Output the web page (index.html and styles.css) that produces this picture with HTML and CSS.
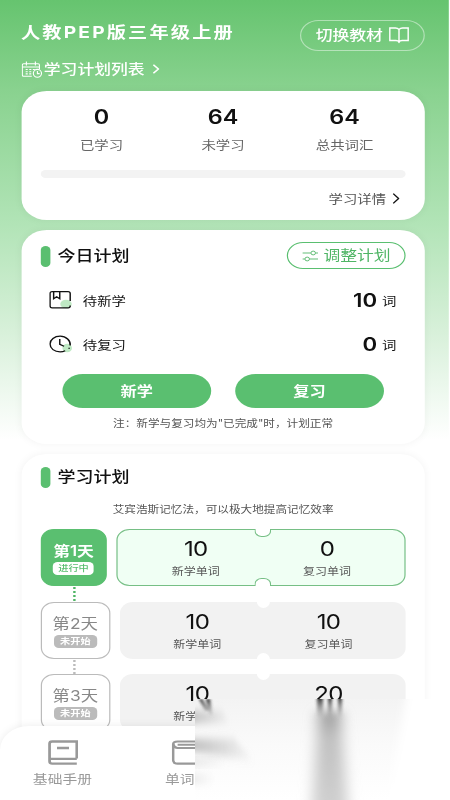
FILE: index.html
```
<!DOCTYPE html>
<html lang="zh-CN">
<head>
    <meta charset="UTF-8">
    <meta name="viewport" content="width=device-width, initial-scale=1.0">
    <title>学习计划</title>
    <link rel="stylesheet" href="styles.css">
</head>
<body>
    <div class="screen">
        <header class="header">
            <div class="header-top">
                <h1>人教PEP版三年级上册</h1>
                <button class="switch-btn"><span>切换教材</span>
                    <svg width="17" height="17" viewBox="0 0 20 17" preserveAspectRatio="none" fill="none" stroke="currentColor" stroke-width="1.4"><path d="M10 2.5C9 1.4 8 1 6.500 1H1v12.500h6c1.500 0 2.500.5 3 1.500.5-1 1.500-1.500 3-1.500h6V1h-5.500C12 1 11 1.400 10 2.500V16"/></svg>
                </button>
            </div>
            <a class="plan-link">
                <svg width="17" height="17" viewBox="0 0 20 17" preserveAspectRatio="none" fill="none" stroke="currentColor" stroke-width="1.1"><path d="M17.500 8V4c0-.8-.5-1.300-1.300-1.300H2C1.200 2.700.7 3.200.7 4v10c0 .8.5 1.300 1.300 1.300h8M.7 6h16.800M4.700.5v4M13.500.5v4"/><path d="M4 8.500h2M7.500 8.500h2M11 8.500h2M4 10.700h2M7.500 10.700h2M4 12.900h2M7.500 12.900h2"/><ellipse cx="15.500" cy="12.300" rx="4" ry="3.900"/><path d="M15.500 10v2.600h2.200"/></svg>
                <span>学习计划列表</span>
                <svg class="link-arrow" width="6" height="10" viewBox="0 0 6 10" fill="none" stroke="currentColor" stroke-width="1.400"><path d="M.8.8L5 5 .8 9.200"/></svg>
            </a>
        </header>

        <section class="card summary">
            <div class="stats">
                <div class="stat"><strong>0</strong><span>已学习</span></div>
                <div class="stat"><strong>64</strong><span>未学习</span></div>
                <div class="stat"><strong>64</strong><span>总共词汇</span></div>
            </div>
            <div class="progress"></div>
            <a class="detail-link">学习详情
                <svg width="6" height="11" viewBox="0 0 6 11" fill="none" stroke="#111" stroke-width="1.200"><path d="M.7.7L5.200 5.500.7 10.300"/></svg>
            </a>
        </section>

        <section class="card today">
            <div class="card-head">
                <h2>今日计划</h2>
                <button class="adjust-btn">
                    <svg width="13" height="12" viewBox="0 0 13 12" fill="none" stroke="currentColor" stroke-width=".8"><path d="M0 3h7M11 3h2M0 9h2M6 9h7"/><circle cx="9" cy="3" r="1.900"/><circle cx="4" cy="9" r="1.900"/></svg>
                    <span>调整计划</span>
                </button>
            </div>
            <div class="task">
                <svg width="19" height="20" viewBox="0 0 19 20" fill="none" stroke="#111" stroke-width="1.200"><ellipse cx="14" cy="14" rx="4.800" ry="4.300" fill="#bfe9c4" stroke="none"/><path d="M17.500 11V3.500c0-1.200-.6-1.800-1.800-1.800H2.500C1.300 1.700.7 2.300.7 3.500V16c0 1.200.6 1.800 1.800 1.800h13.200c1.200 0 1.800-.6 1.800-1.800v-.5M3.700 1.700v7l2.500-2 2.600 2v-7"/></svg>
                <span class="task-name">待新学</span>
                <strong>10</strong><em>词</em>
            </div>
            <div class="task">
                <svg width="19" height="20" viewBox="0 0 19 20" fill="none" stroke="#111" stroke-width="1.200"><ellipse cx="15" cy="14" rx="4" ry="4.300" fill="#bfe9c4" stroke="none"/><path d="M17.500 11.500c.5-5-3.400-9.300-8.400-9.300-4.700 0-8.400 3.400-8.400 7.800s3.700 7.900 8.400 7.900c1.600 0 3-.4 4.200-1.100M16.300 14.800l.6-1.100M8.800 5v5.300l3.600 2"/></svg>
                <span class="task-name">待复习</span>
                <strong>0</strong><em>词</em>
            </div>
            <div class="actions">
                <button>新学</button>
                <button>复习</button>
            </div>
            <p class="note">注：新学与复习均为"已完成"时，计划正常</p>
        </section>

        <section class="card plan">
            <div class="card-head">
                <h2>学习计划</h2>
            </div>
            <p class="plan-tip">艾宾浩斯记忆法，可以极大地提高记忆效率</p>
            <div class="day active">
                <div class="day-box"><b>第1天</b><i>进行中</i></div>
                <div class="ticket">
                    <div class="cell"><strong>10</strong><span>新学单词</span></div>
                    <div class="cell"><strong>0</strong><span>复习单词</span></div>
                </div>
            </div>
            <div class="day">
                <div class="day-box"><b>第2天</b><i>未开始</i></div>
                <div class="ticket">
                    <div class="cell"><strong>10</strong><span>新学单词</span></div>
                    <div class="cell"><strong>10</strong><span>复习单词</span></div>
                </div>
            </div>
            <div class="day">
                <div class="day-box"><b>第3天</b><i>未开始</i></div>
                <div class="ticket">
                    <div class="cell"><strong>10</strong><span>新学</span></div>
                    <div class="cell"><strong>20</strong><span></span></div>
                </div>
            </div>
        </section>

        <nav class="tabbar">
            <a class="tab">
                <svg width="25" height="25" viewBox="0 0 25 25" fill="none" stroke="currentColor" stroke-width="2.300"><path d="M24 18.500V1.500H3.500C2 1.500 1.300 2.200 1.300 3.700v17.500c0 1.600.7 2.400 2.200 2.400H24M1.500 18.800H24M7.500 8h10"/></svg>
                <span>基础手册</span>
            </a>
            <a class="tab tab-words">
                <svg width="20" height="25" viewBox="0 0 20 25" fill="none" stroke="currentColor" stroke-width="2.100"><path d="M20 1.500H5C2.500 1.500 1.300 2.500 1.300 4.500V20c0 2.400 1.200 3.600 3.700 3.600h15M1.500 4.500C2 6.800 3 8 5 8h15M5 4.700h15"/></svg>
                <span>单词</span>
            </a>
        </nav>
    </div>

    <!-- melting haze over the lower right corner -->
    <svg class="haze" width="450" height="110" viewBox="0 690 450 110">
        <defs>
            <linearGradient id="fade" x1="0" y1="0" x2="0" y2="1">
                <stop offset="0" stop-color="#f2f2f2"/>
                <stop offset=".5" stop-color="#fafafa"/>
                <stop offset="1" stop-color="#fff"/>
            </linearGradient>
            <linearGradient id="drip" x1="0" y1="0" x2="0" y2="1">
                <stop offset="0" stop-color="#999"/>
                <stop offset=".25" stop-color="#c0c0c0"/>
                <stop offset="1" stop-color="#d4d4d4"/>
            </linearGradient>
            <linearGradient id="trail">
                <stop offset="0" stop-color="#bbb"/>
                <stop offset="1" stop-color="#bbb" stop-opacity="0"/>
            </linearGradient>
            <linearGradient id="drop" x1="0" y1="0" x2="0" y2="1">
                <stop offset="0" stop-color="#222"/>
                <stop offset="1" stop-color="#999" stop-opacity="0"/>
            </linearGradient>
            <filter id="wide" x="-50%" y="-20%" width="200%" height="140%"><feGaussianBlur stdDeviation="7 5"/></filter>
            <filter id="thin" x="-100%" y="-20%" width="300%" height="140%"><feGaussianBlur stdDeviation="1.500 .8"/></filter>
            <filter id="side" x="-20%" y="-80%" width="140%" height="260%"><feGaussianBlur stdDeviation="1 4"/></filter>
            <filter id="edge" x="-20%" y="-20%" width="140%" height="140%"><feGaussianBlur stdDeviation="4"/></filter>
            <clipPath id="melt"><path d="M195 800V708l3-9h252v101z"/></clipPath>
        </defs>
        <g clip-path="url(#melt)">
            <path d="M190 690h260v110H190z" fill="url(#fade)"/>
            <path d="M407 690h55v125H386l12-70z" fill="#fff" filter="url(#edge)"/>
            <path d="M190 711h32l10 12h-42z" fill="url(#trail)" filter="url(#side)"/>
            <path d="M190 739h44l22 22-66-10z" fill="url(#trail)" filter="url(#side)"/>
            <path d="M190 760h35v5h-35z" fill="url(#trail)" opacity=".6" filter="url(#side)"/>
            <path d="M190 775h25v8h-25z" fill="url(#trail)" opacity=".4" filter="url(#side)"/>
            <path d="M199 699h3l8 12h-5zM206 699h4l3 19-4-5z" fill="url(#drop)" filter="url(#thin)"/>
            <path d="M319 711h21l9 110h-38z" fill="url(#drip)" filter="url(#wide)"/>
            <path d="M317 697h6v22h-6zM328 697h4v22h-4zM338 697h4v22h-4z" fill="url(#drop)" filter="url(#thin)"/>
        </g>
    </svg>
</body>
</html>
```

FILE: styles.css
```
* {
    margin: 0;
    padding: 0;
    box-sizing: border-box;
}

body {
    width: 450px;
    height: 800px;
    overflow: hidden;
    position: relative;
    background: #fff;
    font-family: Inter, "Noto Sans CJK SC", sans-serif;
    color: #111;
}

button {
    font-family: inherit;
    border: none;
    background: none;
}

/* the whole screen is drawn 1.2 times wider than it is laid out */
.screen {
    position: relative;
    width: 373.5px;
    height: 800px;
    padding: 0 19.2px 0 17.5px;
    overflow: hidden;
    transform: scaleX(1.2);
    transform-origin: 0 0;
    background: linear-gradient(#66c46f 0, #89d28f 90px, #b2e4b7 225px, #d7f0d9 330px, #fff 440px);
}

.header {
    height: 91px;
    padding-top: 20px;
    color: #fff;
}

.header-top {
    display: flex;
    justify-content: space-between;
    align-items: center;
    height: 31px;
}

.header h1 {
    font-size: 16px;
    line-height: 24px;
    font-weight: 700;
    letter-spacing: 1.8px;
    margin-top: -8px;
}

.switch-btn {
    display: flex;
    align-items: center;
    justify-content: center;
    gap: 5px;
    width: 104.5px;
    height: 31px;
    border: 1.5px solid rgba(255, 255, 255, 0.45);
    border-radius: 16px;
    color: #fff;
    font-size: 14px;
    font-weight: 500;
}

.switch-btn span,
.adjust-btn span {
    padding-bottom: 3px;
}

.plan-link {
    display: flex;
    align-items: center;
    height: 20px;
    margin-top: 8px;
    font-size: 14px;
    font-weight: 500;
}

.plan-link span {
    margin: 0 6px 0 2px;
    padding-bottom: 2px;
}

.card {
    background: #fff;
    border-radius: 21px;
    box-shadow: 0 0 8px rgba(0, 0, 0, 0.05);
}

.summary {
    height: 129px;
    padding: 14px 16.5px 0;
}

.stats {
    display: grid;
    grid-template-columns: repeat(3, 1fr);
}

.stat {
    display: flex;
    flex-direction: column;
    align-items: center;
}

.stat strong {
    font-size: 19.500px;
    line-height: 24px;
    font-weight: 600;
}

.stat span {
    margin-top: 8px;
    font-size: 12px;
    line-height: 18px;
    font-weight: 400;
    color: #666;
}

.progress {
    height: 8px;
    margin-top: 15px;
    border-radius: 4px;
    background: #f3f3f3;
}

.detail-link {
    display: flex;
    justify-content: flex-end;
    align-items: center;
    gap: 5px;
    height: 20px;
    margin: 10px 5px 0 0;
    font-size: 12px;
    font-weight: 400;
    color: #555;
}

.today {
    height: 214px;
    margin-top: 10px;
    padding: 12px 16px 0;
}

.card-head {
    display: flex;
    align-items: center;
    height: 27px;
}

.card-head h2 {
    display: flex;
    align-items: center;
    gap: 6.5px;
    font-size: 15px;
    line-height: 22px;
    font-weight: 500;
}

.card-head h2::before {
    content: "";
    width: 8px;
    height: 21px;
    margin-top: 2px;
    border-radius: 4px;
    background: #5abf70;
}

.adjust-btn {
    display: flex;
    align-items: center;
    justify-content: center;
    gap: 5px;
    width: 99.5px;
    height: 27px;
    margin-left: auto;
    border: 1px solid #5abf70;
    border-radius: 14px;
    color: #4fb565;
    font-size: 14px;
}

.task {
    display: flex;
    align-items: center;
    height: 44px;
    padding: 0 8px 0 7px;
}

.card-head + .task {
    margin-top: 9px;
}

.task-name {
    flex: 1;
    margin-left: 9.5px;
    font-size: 12px;
}

.task strong {
    font-size: 18.500px;
    font-weight: 600;
}

.task em {
    margin-left: 4px;
    font-size: 12px;
    font-style: normal;
}

.actions {
    display: flex;
    justify-content: center;
    gap: 20px;
    margin-top: 8px;
}

.actions button {
    width: 124px;
    height: 34px;
    padding-bottom: 2px;
    border-radius: 17px;
    background: #5abf70;
    color: #fff;
    font-size: 13.500px;
    font-weight: 700;
}

.note,
.plan-tip {
    font-size: 9.700px;
    line-height: 16px;
    font-weight: 400;
    color: #555;
    text-align: center;
}

.note {
    margin-top: 8px;
}

.plan {
    height: 380px;
    margin-top: 10px;
    padding: 9px 16px 0;
}

.plan-tip {
    margin: 12px 0 11px;
}

.day {
    position: relative;
    display: flex;
    justify-content: space-between;
    height: 57px;
    margin-bottom: 15.5px;
}

.day-box {
    display: flex;
    flex-direction: column;
    align-items: center;
    width: 58.5px;
    padding-top: 11px;
    border: 1px solid #bbb;
    border-radius: 11px;
    color: #888;
}

.day-box b {
    font-size: 14.500px;
    line-height: 20px;
    font-weight: 400;
}

.day-box i {
    width: 36.5px;
    height: 13px;
    margin-top: 1px;
    border-radius: 4px;
    background: #bbb;
    color: #fff;
    font-size: 8.500px;
    line-height: 12.5px;
    font-style: normal;
    font-weight: 700;
    text-align: center;
}

/* dotted line down to the next day */
.day::after {
    content: "";
    position: absolute;
    left: 27.5px;
    top: 58px;
    height: 14px;
    border-left: 2px dotted #bbb;
}

.ticket {
    position: relative;
    display: grid;
    grid-template-columns: 1fr 1fr;
    width: 238.5px;
    background: #f2f2f2;
    border-radius: 11px;
}

.ticket::before,
.ticket::after {
    content: "";
    position: absolute;
    left: 50%;
    width: 11px;
    height: 13px;
    margin-left: -5.5px;
    background: #fff;
    border-radius: 50%;
}

.ticket::before {
    top: -7px;
}

.ticket::after {
    bottom: -7px;
}

.cell {
    display: flex;
    flex-direction: column;
    align-items: center;
    padding-top: 9px;
}

.cell + .cell {
    padding-right: 10px;
}

.cell:first-child {
    padding-left: 10px;
}

.cell strong {
    font-size: 20px;
    line-height: 23px;
    font-weight: 400;
    letter-spacing: -0.6px;
}

.cell span {
    min-width: 40px;
    margin-top: 3px;
    font-size: 10px;
    line-height: 15px;
    font-weight: 400;
    color: #555;
}

.active .day-box {
    width: 55.5px;
    border-color: #5abf70;
    background: #5abf70;
    color: #fff;
}

.active .day-box b {
    font-size: 14px;
    font-weight: 600;
}

.active .day-box i {
    width: 34px;
    background: #fff;
    color: #5abf70;
    font-weight: 500;
}

.active::after {
    border-color: #4fb565;
}

.active .ticket {
    width: 241px;
    background: #f0fff4;
    border: 1px solid #76bf85;
}

.active .cell {
    padding-top: 8px;
}

.active .ticket::before,
.active .ticket::after {
    width: 12px;
    height: 7px;
    margin-left: -6px;
    border: 1px solid #76bf85;
}

.active .ticket::before {
    top: -1px;
    border-top: none;
    border-radius: 0 0 6px 6px;
}

.active .ticket::after {
    bottom: -1px;
    border-bottom: none;
    border-radius: 6px 6px 0 0;
}

.tabbar {
    position: absolute;
    left: 0;
    right: 0;
    top: 726px;
    height: 74px;
    display: flex;
    padding: 14px 0 0 2px;
    border-radius: 24px 24px 0 0;
    background: #fff;
    box-shadow: 0 0 8px rgba(0, 0, 0, 0.08);
}

.tab {
    display: flex;
    flex-direction: column;
    align-items: center;
    width: 100px;
    color: #999;
}

.tab-words {
    align-items: flex-start;
    padding-left: 35.500px;
}

.tab-words svg {
    margin-left: 5.500px;
}

.tab span {
    margin-top: 6px;
    font-size: 12.300px;
    line-height: 18px;
}

.haze {
    position: absolute;
    left: 0;
    top: 690px;
}
```
